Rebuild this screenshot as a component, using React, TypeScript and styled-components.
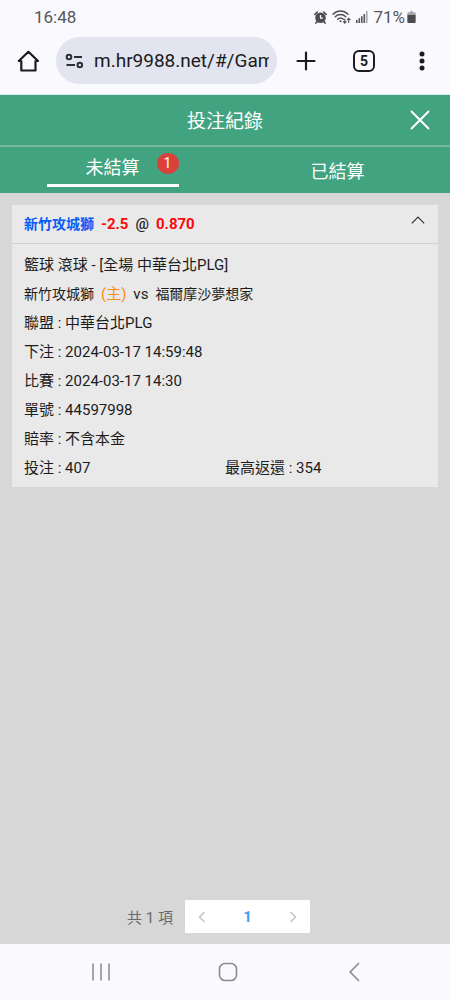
import React from 'react';
import styled, { createGlobalStyle } from 'styled-components';

const GlobalStyle = createGlobalStyle`
  *, *::before, *::after { box-sizing: border-box; }
  body {
    margin: 0;
    background: #d7d7d7;
    color: #1c1c1c;
    font-family: Roboto, "Noto Sans CJK TC", sans-serif;
  }
  button, input { font: inherit; color: inherit; margin: 0; padding: 0; border: 0; background: none; }
  svg { display: block; flex: none; }
`;

const Screen = styled.div`
  display: flex;
  flex-direction: column;
  min-height: 100vh;
`;

const StatusBar = styled.div`
  display: flex;
  align-items: center;
  justify-content: space-between;
  height: 34px;
  padding: 0 34px;
  background: #faf9fe;
  color: #56565a;
  font-size: 17px;
  line-height: 34px;
`;

const StatusIcons = styled.div`
  display: flex;
  align-items: center;
  gap: 5px;
`;

const Battery = styled.span`
  display: flex;
  align-items: center;
  gap: 2px;
`;

const BrowserBar = styled.div`
  display: flex;
  align-items: center;
  height: 61px;
  padding: 0 16px 7px;
  background: #faf9fe;
  border-bottom: 1px solid #dce6ec;
  color: #1b1b20;
`;

const AddressBox = styled.label`
  display: flex;
  flex: 1;
  align-items: center;
  gap: 10px;
  min-width: 0;
  height: 47px;
  margin: 0 17px 0 16px;
  padding: 0 8px 0 9px;
  border-radius: 24px;
  background: #e2e5ef;
`;

const AddressInput = styled.input`
  flex: 1;
  min-width: 0;
  font-size: 19px;
  line-height: 24px;
  outline: none;
`;

const BrowserActions = styled.div`
  display: flex;
  gap: 34px;
`;

const IconButton = styled.button`
  display: flex;
  align-items: center;
  justify-content: center;
  width: 24px;
  height: 24px;
  cursor: pointer;
`;

const TabCount = styled(IconButton)`
  width: 22px;
  height: 22px;
  margin: 1px;
  border: 2px solid #1b1b20;
  border-radius: 6px;
  font-size: 14px;
  font-weight: 700;
`;

const TitleBar = styled.header`
  display: grid;
  grid-template-columns: 24px 1fr 24px;
  align-items: center;
  height: 52px;
  padding: 0 18px;
  border-bottom: 2px solid #75bba1;
  background: #41a380;
  color: #fff;
`;

const Title = styled.h1`
  grid-column: 2;
  margin: 0;
  padding-top: 4px;
  font-size: 19px;
  font-weight: 400;
  line-height: 28px;
  text-align: center;
`;

const Tabs = styled.nav`
  display: grid;
  grid-template-columns: 1fr 1fr;
  justify-items: center;
  height: 46px;
  background: #41a380;
`;

const Tab = styled.button<{ $active?: boolean }>`
  position: relative;
  width: 132px;
  height: ${p => (p.$active ? 40 : 46)}px;
  padding-top: 4px;
  border-bottom: ${p => (p.$active ? '3px solid #fff' : '0')};
  color: #fff;
  font-size: 18px;
  line-height: 28px;
  cursor: pointer;
`;

const Badge = styled.span`
  position: absolute;
  top: 6px;
  right: 0;
  width: 22px;
  height: 21px;
  border-radius: 50%;
  background: #dc403b;
  font-size: 14px;
  line-height: 20px;
`;

const Content = styled.main`
  display: flex;
  flex: 1;
  flex-direction: column;
  padding: 12px 12px 11px;
  background: #d7d7d7;
`;

const Card = styled.article`
  background: #e9e9e9;
  font-size: 15px;
`;

const CardHeader = styled.div`
  display: flex;
  align-items: center;
  justify-content: space-between;
  height: 39px;
  padding: 0 12px;
  border-bottom: 1px solid #d0d2d1;
`;

const Pick = styled.h2`
  display: flex;
  align-items: baseline;
  gap: 7px;
  margin: 0;
  font-size: 15px;
  font-weight: 700;
  line-height: 22px;
`;

const Team = styled.span`
  font-size: 14px;
`;

const PickedTeam = styled(Team)`
  color: #0a5cf5;
`;

const Odds = styled.span`
  color: #fa0a0a;
`;

const At = styled.span`
  font-weight: 500;
`;

const Toggle = styled(IconButton)`
  width: 16px;
  height: 30px;
  align-items: flex-start;
  padding-top: 7px;
`;

const Details = styled.div`
  padding: 7px 12px 4px;
`;

const Row = styled.p`
  margin: 0;
  line-height: 29px;
`;

const MatchRow = styled(Row)`
  display: flex;
  align-items: baseline;
  gap: 7px;
`;

const SplitRow = styled(Row)`
  display: grid;
  grid-template-columns: 1fr 1fr;
`;

const Home = styled.span`
  color: #fb8c14;
`;

const Pagination = styled.nav`
  display: flex;
  align-items: center;
  justify-content: center;
  gap: 12px;
  margin-top: auto;
  padding-right: 13px;
  color: #68696b;
  font-size: 15px;
`;

const Pages = styled.div`
  display: flex;
  align-items: center;
  justify-content: space-between;
  width: 125px;
  height: 33px;
  padding: 0 5px;
  background: #fff;
`;

const PageButton = styled(IconButton)`
  color: #409eff;
  font-size: 15px;
  font-weight: 700;
`;

const SystemBar = styled.footer`
  display: flex;
  align-items: center;
  justify-content: space-between;
  height: 56px;
  padding: 0 84px 0 89px;
  background: #faf9fe;
`;

const ENTRIES = [
  ['聯盟', '中華台北PLG'],
  ['下注', '2024-03-17 14:59:48'],
  ['比賽', '2024-03-17 14:30'],
  ['單號', '44597998'],
  ['賠率', '不含本金'],
];

const AlarmIcon = () => (
  <svg width="13" height="13" viewBox="0 0 14 14">
    <circle cx="7" cy="7.3" r="5.7" fill="#4d4d50" />
    <path d="M1 3.6 3.6 1.1M13 3.6 10.4 1.1M3.4 11.3 2.1 13M10.6 11.3 11.9 13" stroke="#4d4d50" strokeWidth="1.8" strokeLinecap="round" />
    <path d="M7 4.3v3.3h2.6" stroke="#faf9fe" strokeWidth="1.3" fill="none" />
  </svg>
);

const WifiIcon = () => (
  <svg width="19" height="14" viewBox="0 0 19 14" fill="none" stroke="#505053" strokeWidth="1.4" strokeLinecap="round">
    <path d="M1 4.2C5.2-.1 11.8-.1 16 4.2M3.2 6.8c3-3 7.6-3 10.6 0M5.6 9.3c1.7-1.6 4.1-1.6 5.8 0" />
    <path d="M8.5 11.3h.1" strokeWidth="2" />
    <path d="M12.8 9v4M11.4 11.7l1.4 1.4 1.3-1.4M16.7 12.5V8.3M15.3 9.7l1.4-1.4 1.4 1.4" strokeWidth="1.1" />
  </svg>
);

const SignalIcon = () => (
  <svg width="12" height="12" viewBox="0 0 12 12">
    <path d="M0 9h1.6v3H0zM2.5 7.3h1.6V12H2.5zM5 5.2h1.6V12H5zM7.5 3h1.6v9H7.5z" fill="#56565a" />
    <path d="M10 0h1.6v12H10z" fill="#a9a9ad" />
  </svg>
);

const BatteryIcon = () => (
  <svg width="9" height="12" viewBox="0 0 9 13">
    <path d="M3 0h3v1.3H8a1 1 0 0 1 1 1V4H0V2.3a1 1 0 0 1 1-1h2z" fill="#aaaaad" />
    <path d="M0 4h9v8a1 1 0 0 1-1 1H1a1 1 0 0 1-1-1z" fill="#4c4c4e" />
  </svg>
);

const HomeIcon = () => (
  <svg width="24" height="24" viewBox="0 0 24 24" fill="none" stroke="currentColor" strokeWidth="2.2" strokeLinejoin="round" strokeLinecap="round">
    <path d="M2.8 12H5.3V21.5H19.5V12H22L12.4 2.8Z" />
  </svg>
);

const SiteIcon = () => (
  <svg width="19" height="16" viewBox="0 0 19 16" fill="none" stroke="#2c2e36" strokeWidth="2">
    <circle cx="4" cy="4" r="2.3" />
    <path d="M9 4h8M1.5 12H10" />
    <circle cx="14.8" cy="12" r="2.3" />
  </svg>
);

const PlusIcon = () => (
  <svg width="20" height="20" viewBox="0 0 20 20" stroke="currentColor" strokeWidth="2.2" strokeLinecap="round">
    <path d="M10 1.5v17M1.5 10h17" />
  </svg>
);

const MoreIcon = () => (
  <svg width="20" height="20" viewBox="0 0 20 20" fill="currentColor">
    <circle cx="10" cy="3" r="2.5" />
    <circle cx="10" cy="10" r="2.5" />
    <circle cx="10" cy="17" r="2.5" />
  </svg>
);

const CloseIcon = () => (
  <svg width="20" height="20" viewBox="0 0 20 20" stroke="currentColor" strokeWidth="2" strokeLinecap="round">
    <path d="m1.5 1.5 17 17M18.5 1.5l-17 17" />
  </svg>
);

const CollapseIcon = () => (
  <svg width="14" height="8" viewBox="0 0 14 8" fill="none" stroke="#333" strokeWidth="1.2">
    <path d="M.8 7.3 7 1l6.2 6.3" />
  </svg>
);

const Chevron = ({ next }: { next?: boolean }) => (
  <svg width="8" height="12" viewBox="0 0 8 12" fill="none" stroke="#c0c4cc" strokeWidth="1.5">
    <path d={next ? 'M1.5 1l5 5-5 5' : 'M6.5 1l-5 5 5 5'} />
  </svg>
);

const RecentsIcon = () => (
  <svg width="18" height="18" viewBox="0 0 18 18" stroke="#8b8b8f" strokeWidth="1.5">
    <path d="M1 .5v17M9 .5v17M17 .5v17" />
  </svg>
);

const HomeKeyIcon = () => (
  <svg width="20" height="20" viewBox="0 0 20 20" fill="none" stroke="#8b8b8f" strokeWidth="1.6">
    <rect x="1.5" y="1.5" width="17" height="17" rx="5.5" />
  </svg>
);

const BackIcon = () => (
  <svg width="11" height="20" viewBox="0 0 11 20" fill="none" stroke="#8b8b8f" strokeWidth="1.6">
    <path d="M10 1 1.2 10 10 19" />
  </svg>
);

export default function App() {
  return (
    <Screen>
      <GlobalStyle />
      <StatusBar>
        <time>16:48</time>
        <StatusIcons>
          <AlarmIcon />
          <WifiIcon />
          <SignalIcon />
          <Battery>71%<BatteryIcon /></Battery>
        </StatusIcons>
      </StatusBar>
      <BrowserBar>
        <IconButton aria-label="Home"><HomeIcon /></IconButton>
        <AddressBox>
          <SiteIcon />
          <AddressInput aria-label="Address" defaultValue="m.hr9988.net/#/Game" />
        </AddressBox>
        <BrowserActions>
          <IconButton aria-label="New tab"><PlusIcon /></IconButton>
          <TabCount aria-label="Open tabs">5</TabCount>
          <IconButton aria-label="More"><MoreIcon /></IconButton>
        </BrowserActions>
      </BrowserBar>
      <TitleBar>
        <Title>投注紀錄</Title>
        <IconButton aria-label="關閉"><CloseIcon /></IconButton>
      </TitleBar>
      <Tabs>
        <Tab $active>未結算<Badge>1</Badge></Tab>
        <Tab>已結算</Tab>
      </Tabs>
      <Content>
        <Card>
          <CardHeader>
            <Pick>
              <PickedTeam>新竹攻城獅</PickedTeam>
              <Odds>-2.5</Odds>
              <At>@</At>
              <Odds>0.870</Odds>
            </Pick>
            <Toggle aria-label="收合"><CollapseIcon /></Toggle>
          </CardHeader>
          <Details>
            <Row>籃球 滾球 - [全場 中華台北PLG]</Row>
            <MatchRow>
              <Team>新竹攻城獅</Team>
              <Home>(主)</Home>
              <span>vs</span>
              <Team>福爾摩沙夢想家</Team>
            </MatchRow>
            {ENTRIES.map(([label, value]) => (
              <Row key={label}>{label} : {value}</Row>
            ))}
            <SplitRow>
              <span>投注 : 407</span>
              <span>最高返還 : 354</span>
            </SplitRow>
          </Details>
        </Card>
        <Pagination aria-label="分頁">
          <span>共 1 項</span>
          <Pages>
            <IconButton aria-label="上一頁"><Chevron /></IconButton>
            <PageButton aria-current="page">1</PageButton>
            <IconButton aria-label="下一頁"><Chevron next /></IconButton>
          </Pages>
        </Pagination>
      </Content>
      <SystemBar>
        <IconButton aria-label="Recent apps"><RecentsIcon /></IconButton>
        <IconButton aria-label="Home screen"><HomeKeyIcon /></IconButton>
        <IconButton aria-label="Back"><BackIcon /></IconButton>
      </SystemBar>
    </Screen>
  );
}
